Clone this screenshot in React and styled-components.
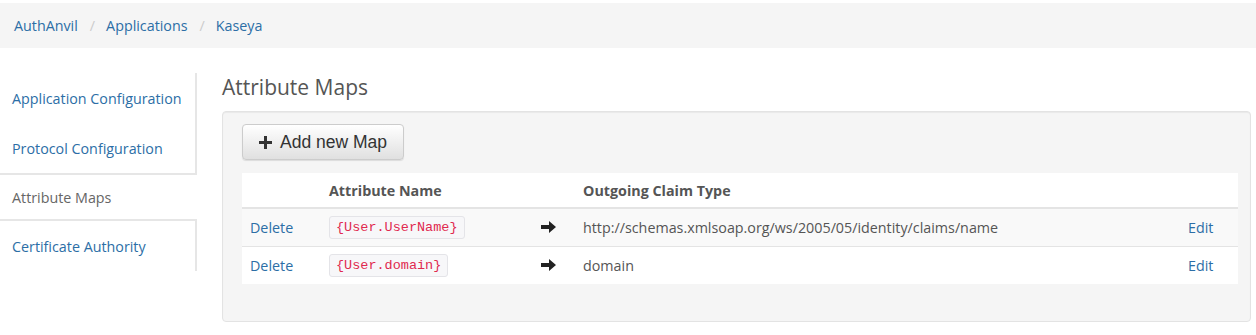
import React from "react";
import styled, { createGlobalStyle } from "styled-components";

const GlobalStyle = createGlobalStyle`
  body {
    margin: 0;
    background: #fff;
    font-family: "Open Sans", "Noto Sans", sans-serif;
    font-size: 14.3px;
    color: #555;
  }
  * { box-sizing: border-box; }
`;

const Page = styled.div`
  padding-top: 3px;
`;

const Breadcrumb = styled.ol`
  list-style: none;
  margin: 0;
  height: 45px;
  padding: 0 14px;
  background: #f5f5f5;
  display: flex;
  align-items: center;
  li + li::before {
    content: "/";
    color: #ccc;
    padding: 0 11px 0 12px;
  }
  a {
    color: #2c6ea6;
    text-decoration: none;
  }
`;

const Body = styled.div`
  display: flex;
  gap: 25px;
  padding: 25px 5px 0 0;
`;

const Nav = styled.ul`
  list-style: none;
  margin: 0;
  padding: 0;
  width: 197px;
  flex-shrink: 0;
`;

const NavItem = styled.li`
  height: ${({ active }) => (active ? "48px" : "50px")};
  display: flex;
  align-items: center;
  padding-left: 12px;
  color: ${({ active }) => (active ? "#666" : "#2c6ea6")};
  border-right: ${({ active }) => (active ? "0" : "2px solid #e6e6e6")};
  border-top: ${({ active }) => (active ? "2px solid #e6e6e6" : "0")};
  border-bottom: ${({ active }) => (active ? "2px solid #e6e6e6" : "0")};
`;

const Main = styled.div`
  flex: 1;
  padding-top: 2px;
`;

const Title = styled.h2`
  margin: 0 0 12px;
  font-size: 21px;
  font-weight: 400;
  line-height: 24px;
  color: #555;
`;

const Well = styled.div`
  background: #f5f5f5;
  border: 1px solid #e3e3e3;
  border-radius: 4px;
  box-shadow: inset 0 1px 1px rgba(0, 0, 0, 0.05);
  padding: 12px 12px 37px 19px;
`;

const Button = styled.button`
  display: inline-flex;
  align-items: center;
  gap: 8px;
  height: 36px;
  padding: 0 16px;
  font-family: "Liberation Sans", Arial, sans-serif;
  font-size: 17.5px;
  color: #333;
  background: linear-gradient(to bottom, #fff 0%, #e0e0e0 100%);
  border: 1px solid #ccc;
  border-radius: 4px;
  box-shadow: 0 1px 1px rgba(0, 0, 0, 0.1);
`;

const Table = styled.table`
  width: 100%;
  margin-top: 13px;
  border-collapse: collapse;
  background: #fff;
  th {
    text-align: left;
    font-weight: 700;
    height: 35px;
    padding: 0 8px;
    border-bottom: 2px solid #e4e4e4;
    color: #555;
  }
  td {
    padding: 0 8px;
    height: 38px;
    border-top: 1px solid #e4e4e4;
  }
  tbody tr:nth-child(odd) td {
    background: #f9f9f9;
  }
`;

const Link = styled.a`
  color: #2c6ea6;
  text-decoration: none;
`;

const Code = styled.code`
  display: inline-block;
  font-family: "Liberation Mono", monospace;
  font-size: 13.5px;
  line-height: 21px;
  padding: 0 6px;
  color: #e0294f;
  background: #f7f7f9;
  border: 1px solid #e4e4e8;
  border-radius: 3px;
`;

const Plus = () => (
  <svg width="13" height="13" viewBox="0 0 13 13">
    <path d="M5 0h3v5h5v3H8v5H5V8H0V5h5z" fill="#333" />
  </svg>
);

const Arrow = () => (
  <svg width="15" height="12" viewBox="0 0 15 12" style={{ display: "block" }}>
    <path d="M0 4h8V0l7 6-7 6V8H0z" fill="#222" />
  </svg>
);

const rows = [
  { name: "{User.UserName}", claim: "http://schemas.xmlsoap.org/ws/2005/05/identity/claims/name" },
  { name: "{User.domain}", claim: "domain" },
];

const navItems = ["Application Configuration", "Protocol Configuration", "Attribute Maps", "Certificate Authority"];

export default function App() {
  return (
    <Page>
      <GlobalStyle />
      <Breadcrumb>
        <li><a href="#">AuthAnvil</a></li>
        <li><a href="#">Applications</a></li>
        <li><a href="#">Kaseya</a></li>
      </Breadcrumb>
      <Body>
        <Nav>
          {navItems.map((n) => (
            <NavItem key={n} active={n === "Attribute Maps"}>{n}</NavItem>
          ))}
        </Nav>
        <Main>
          <Title>Attribute Maps</Title>
          <Well>
            <Button><Plus /> Add new Map</Button>
            <Table>
              <colgroup>
                <col style={{ width: 79 }} />
                <col style={{ width: 212 }} />
                <col style={{ width: 42 }} />
                <col />
                <col style={{ width: 58 }} />
              </colgroup>
              <thead>
                <tr>
                  <th></th>
                  <th>Attribute Name</th>
                  <th></th>
                  <th>Outgoing Claim Type</th>
                  <th></th>
                </tr>
              </thead>
              <tbody>
                {rows.map((r) => (
                  <tr key={r.name}>
                    <td><Link href="#">Delete</Link></td>
                    <td><Code>{r.name}</Code></td>
                    <td><Arrow /></td>
                    <td>{r.claim}</td>
                    <td><Link href="#">Edit</Link></td>
                  </tr>
                ))}
              </tbody>
            </Table>
          </Well>
        </Main>
      </Body>
    </Page>
  );
}
